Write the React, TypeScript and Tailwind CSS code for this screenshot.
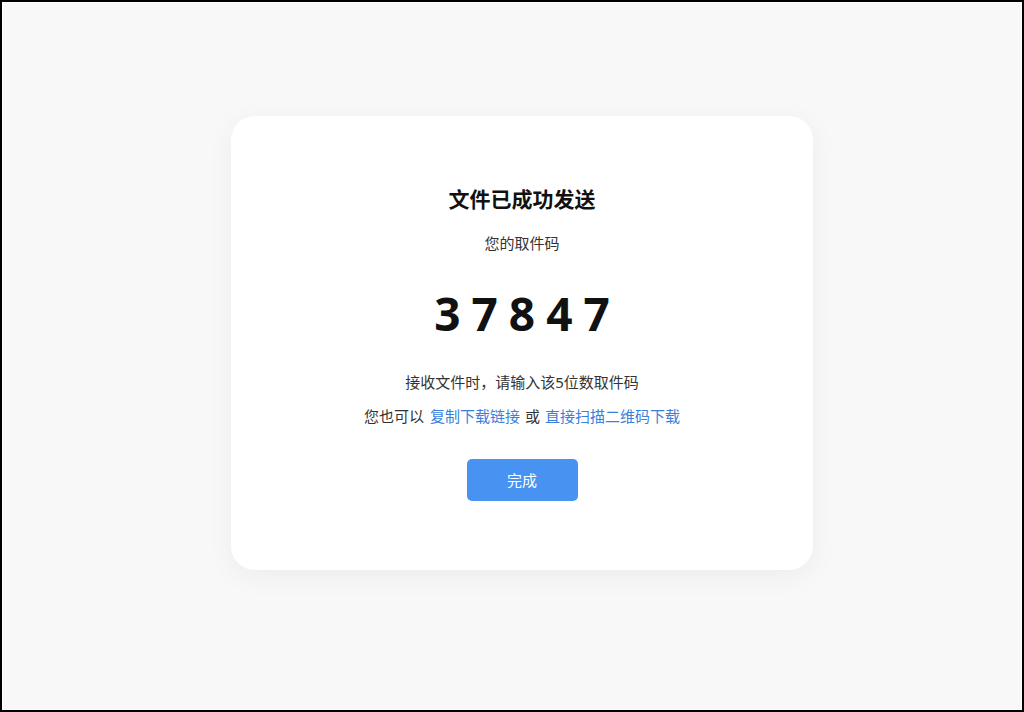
import React from "react";

export default function App() {
  return (
    <div
      className="w-[1024px] h-[712px] border-2 border-black bg-[#f8f8f8]"
      style={{ fontFamily: '"Noto Sans", "Noto Sans CJK SC", sans-serif' }}
    >
      <div className="h-full w-full border border-white pl-[228px] pt-[113px]">
        <div className="w-[582px] h-[454px] bg-white rounded-[24px] shadow-[0_6px_28px_rgba(0,0,0,0.05)] flex flex-col items-center pt-[68px]">
          <div className="text-[21px] leading-[30px] font-bold text-[#111]">文件已成功发送</div>
          <div className="mt-[18px] text-[15px] leading-[22px] text-[#333]">您的取件码</div>
          <div className="mt-[31px] h-[56px] text-[46px] leading-[56px] font-bold text-[#111] tracking-[11px] pl-[11px]">
            37847
          </div>
          <div className="mt-[30px] text-[15px] leading-[22px] text-[#333]">接收文件时，请输入该5位数取件码</div>
          <div className="mt-[12px] text-[15px] leading-[22px] text-[#333] flex">
            <span>您也可以</span>
            <a className="ml-[6px] text-[#3a7fdc] cursor-pointer">复制下载链接</a>
            <span className="mx-[5px]">或</span>
            <a className="text-[#3a7fdc] cursor-pointer">直接扫描二维码下载</a>
          </div>
          <button className="mt-[32px] w-[111px] h-[42px] rounded-[5px] bg-[#4893f2] text-white text-[15px] leading-[22px]">
            完成
          </button>
        </div>
      </div>
    </div>
  );
}
